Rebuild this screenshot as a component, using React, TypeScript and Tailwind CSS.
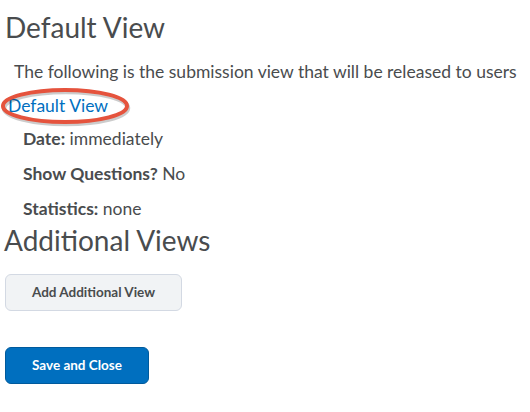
const App = () => {
  return (
    <div className="font-['Lato',sans-serif] text-[#494c4e] bg-white w-[530px] h-[412px] overflow-hidden">
      <h1 className="text-[28px] leading-[34px] pl-[5px] pt-[10px]">Default View</h1>
      <p className="text-[17.5px] leading-[24px] pl-[14px] mt-[16px] whitespace-nowrap">
        The following is the submission view that will be released to users
      </p>
      <div className="relative mt-[10px] pl-[8px] h-[24px]">
        <a href="#" className="text-[17.5px] leading-[24px] text-[#006fbf]">
          Default View
        </a>
        <svg className="absolute left-0 top-[-9px]" width="132" height="42" viewBox="0 0 132 42">
          <ellipse cx="65" cy="21" rx="62" ry="16" fill="none" stroke="#00000033" strokeWidth="4.5" transform="translate(1 2)" />
          <ellipse cx="65" cy="21" rx="62" ry="16" fill="none" stroke="#e5533d" strokeWidth="4" />
        </svg>
      </div>
      <div className="pl-[23px] text-[17.5px] leading-[22px] mt-[10px] flex flex-col gap-[13px]">
        <div>
          <span className="font-bold">Date:</span> immediately
        </div>
        <div>
          <span className="font-bold">Show Questions?</span> No
        </div>
        <div>
          <span className="font-bold">Statistics:</span> none
        </div>
      </div>
      <h2 className="text-[28px] leading-[34px] pl-[4px] mt-[3px]">Additional Views</h2>
      <div className="pl-[5px] mt-[17px]">
        <button className="w-[177px] h-[37px] rounded-[6px] border border-[#d3d9e3] bg-[#f1f3f5] text-[13.5px] font-bold text-[#494c4e]">
          Add Additional View
        </button>
      </div>
      <div className="pl-[5px] mt-[36px]">
        <button className="w-[144px] h-[37px] rounded-[6px] border border-[#005a9c] bg-[#006fbf] text-[13.5px] font-bold text-white">
          Save and Close
        </button>
      </div>
    </div>
  );
};

export default App;
